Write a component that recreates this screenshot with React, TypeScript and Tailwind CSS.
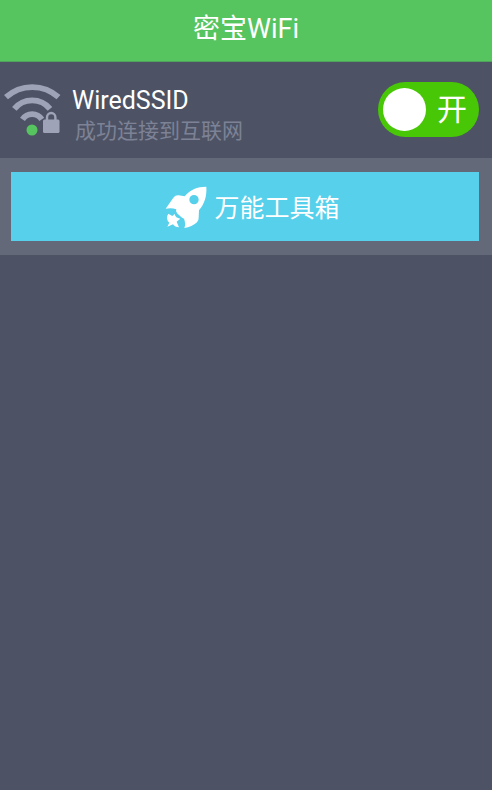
import { useState } from "react";

function WifiLockIcon() {
  return (
    <svg viewBox="0 79 64 60" className="h-[60px] w-16 shrink-0" fill="none" aria-hidden="true">
      <g stroke="#9fa3b8" strokeWidth="5.8">
        <path d="M6 97.200A39 39 0 0 1 58.500 97.200" />
        <path d="M14.300 108.800A23 23 0 0 1 50 108.800" />
        <path d="M22.500 119.300A11.500 11.500 0 0 1 41.800 119.300" />
      </g>
      <circle cx="32" cy="130" r="5.500" fill="#56c45f" />
      <path d="M47 121v-3.500a4.200 4.500 0 0 1 8.400 0v3.500" stroke="#4d5364" strokeWidth="5" />
      <path d="M47 121v-3.500a4.200 4.500 0 0 1 8.400 0v3.500" stroke="#9fa3b8" strokeWidth="2.400" />
      <rect x="43" y="119.500" width="16.500" height="13.500" rx="1.500" fill="#9fa3b8" />
    </svg>
  );
}

function RocketIcon() {
  return (
    <svg viewBox="0 0 144 144" className="size-12 shrink-0" fill="#ffffff" aria-hidden="true">
      <path
        fillRule="evenodd"
        d="M133 11C105 11 85 20 68 40L50 37Q40 36 34 44L11 77Q28 73 43 79Q39 87 52 97Q62 107 66 107Q72 122 67 135Q90 132 105 118Q110 113 110 105L111 82C128 62 135 38 133 11ZM96 36a14 14 0 1 0 0 28a14 14 0 1 0 0-28Z"
      />
      <path d="M19 92L31 99L38 93Q40 105 55 107L44 116L51 133Q39 133 33 124L16 131L22 119Q9 106 19 92Z" />
    </svg>
  );
}

export default function App() {
  const [enabled, setEnabled] = useState(true);

  return (
    <div className="min-h-screen bg-[#4d5364] font-[Roboto,'Noto_Sans_CJK_SC',sans-serif] text-white">
      <header className="flex h-[62px] items-center justify-center border-b border-[#4fa35d] bg-[#56c45f] pb-1">
        <h1 className="text-[27px] leading-8">密宝WiFi</h1>
      </header>
      <main>
        <section className="flex h-24 items-center pb-0.5 pr-[13px]">
          <WifiLockIcon />
          <div className="min-w-0 flex-1 pl-2 pt-3">
            <h2 className="text-[25px] leading-8">WiredSSID</h2>
            <p className="pl-[3px] text-[21px] leading-7 text-[#7d8296]">成功连接到互联网</p>
          </div>
          <label className="flex h-[55px] w-[101px] cursor-pointer items-center justify-between rounded-full bg-[#47c706] pl-[5px] pr-3">
            <input
              type="checkbox"
              role="switch"
              aria-label="WiFi"
              checked={enabled}
              onChange={(event) => setEnabled(event.target.checked)}
              className="size-[43px] cursor-pointer appearance-none rounded-full bg-white"
            />
            <span className="pt-0.5 text-[30px] leading-9">{enabled ? "开" : "关"}</span>
          </label>
        </section>
        <section className="bg-[#646979] pb-[14px] pl-[11px] pr-[13px] pt-[14px]">
          <button
            type="button"
            className="flex h-[69px] w-full cursor-pointer items-center justify-center gap-1 bg-[#57d0eb] pl-3 text-[25px] leading-8"
          >
            <RocketIcon />
            <span className="pt-1">万能工具箱</span>
          </button>
        </section>
      </main>
    </div>
  );
}
